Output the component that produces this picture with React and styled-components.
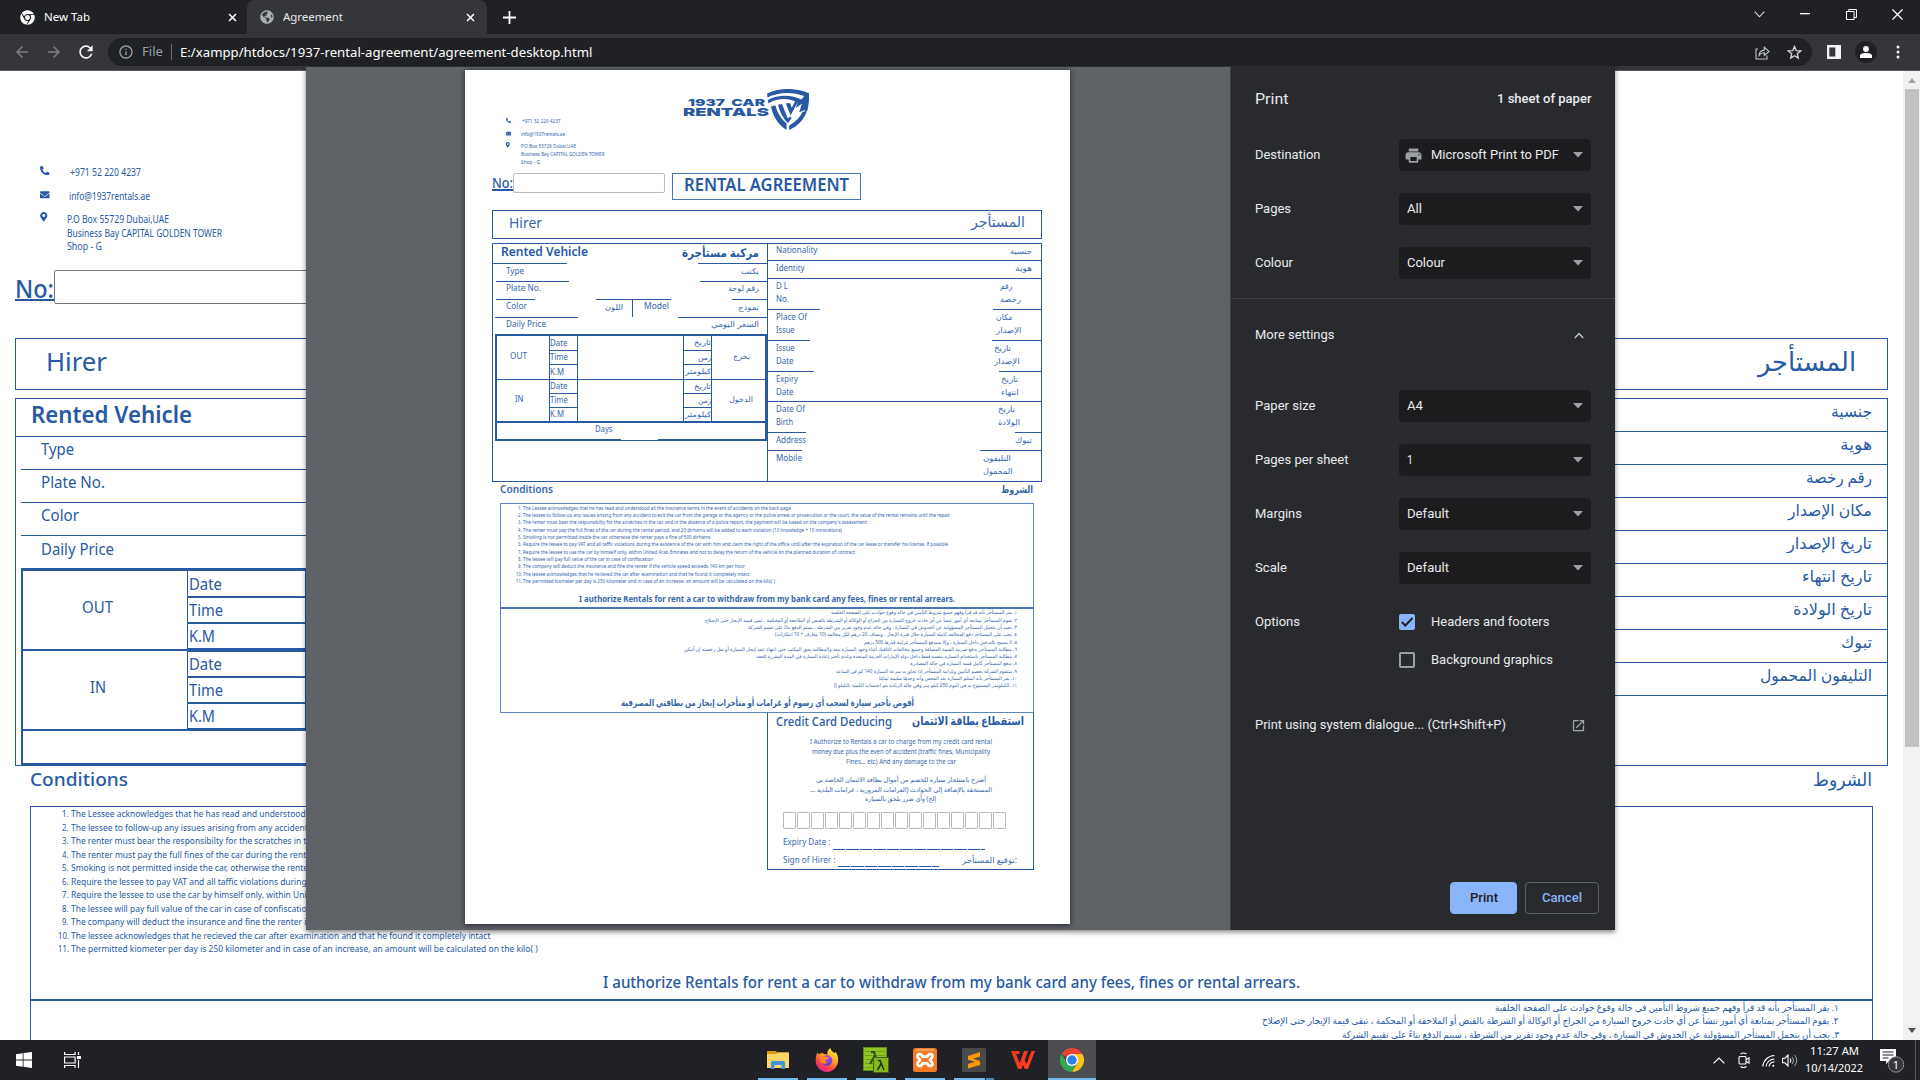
import React, { useLayoutEffect, useRef, useState } from "react";
import styled, { createGlobalStyle, css } from "styled-components";
import { FaPhoneAlt, FaEnvelope, FaMapMarkerAlt, FaChrome, FaGlobeAmericas } from "react-icons/fa";
import { MdArrowBack, MdArrowForward, MdRefresh, MdInfoOutline, MdPrint, MdOpenInNew } from "react-icons/md";

const BLUE = "#2859a3";
const DOC_FONT = '"Noto Sans", "DejaVu Sans", sans-serif';
const UI_FONT = 'Roboto, "Noto Sans", sans-serif';

const Global = createGlobalStyle`
  *{box-sizing:border-box}
  body{margin:0;overflow:hidden;background:#202124}
  svg{display:block;flex:none}
`;

/* ---------- text that keeps a fixed measure ---------- */
const Measure = styled.span`
  display: inline-flex;
  flex: none;
  width: ${(p) => p.$w}px;
  height: ${(p) => p.$size * 1.3}px;
  align-items: center;
  justify-content: flex-start;
  font-size: ${(p) => p.$size}px;
  font-weight: ${(p) => p.$weight || 400};
  line-height: 1.3;
  color: ${(p) => p.$color || "inherit"};
  margin-left: ${(p) => p.$ml || 0}px;
  direction: ltr;
`;
const Inner = styled.span`
  display: inline-block;
  white-space: nowrap;
  transform-origin: 0 50%;
`;
function Fit({ w, size, weight, color, ml, rtl, className, children }) {
  const ref = useRef(null);
  const [k, setK] = useState(1);
  useLayoutEffect(() => {
    const n = ref.current.offsetWidth;
    const exact = ref.current.getBoundingClientRect().width || n;
    setK(w / exact);
  }, [w]);
  return (
    <Measure className={className} $w={w} $size={size} $weight={weight} $color={color} $ml={ml}>
      <Inner ref={ref} dir={rtl ? "rtl" : "ltr"} style={{ transform: k === 1 ? undefined : `scaleX(${k})` }}>
        {children}
      </Inner>
    </Measure>
  );
}

/* ---------- window frame ---------- */
const Screen = styled.div`
  width: 1920px;
  height: 1080px;
  display: flex;
  flex-direction: column;
  position: relative;
  overflow: hidden;
  font-family: ${UI_FONT};
`;
const TabStrip = styled.div`
  height: 34px;
  flex: none;
  display: flex;
  background: #202124;
  color: #fff;
`;
const Tab = styled.div`
  width: ${(p) => p.$w}px;
  display: flex;
  align-items: center;
  padding: 0 ${(p) => (p.$active ? 12 : 10)}px 0 ${(p) => (p.$active ? 13 : 20)}px;
  background: ${(p) => (p.$active ? "#35363a" : "transparent")};
  border-radius: 8px 8px 0 0;
`;
const TabTitle = styled.div`
  flex: 1;
  padding-left: 8px;
  display: flex;
  font-family: "Noto Sans", sans-serif;
  color: ${(p) => (p.$active ? "#e8eaed" : "#fff")};
`;
const NewTab = styled.div`
  width: 44px;
  display: flex;
  align-items: center;
  justify-content: center;
`;
const Spacer = styled.div`
  flex: ${(p) => (p.$w ? "none" : 1)};
  width: ${(p) => (p.$w ? `${p.$w}px` : "auto")};
`;
const WinButton = styled.div`
  width: 46px;
  height: 28px;
  display: flex;
  align-items: center;
  justify-content: center;
`;
const Toolbar = styled.div`
  height: 37px;
  flex: none;
  display: flex;
  align-items: center;
  padding: 0 6px;
  background: #35363a;
  border-bottom: 1px solid #5b5a5f;
  color: #fff;
`;
const NavButton = styled.div`
  width: 32px;
  display: flex;
  justify-content: center;
  color: ${(p) => (p.$off ? "#7d7f83" : "#f1f3f4")};
`;
const Omnibox = styled.div`
  width: 1704px;
  height: 28px;
  margin-left: 6px;
  border-radius: 14px;
  background: #202124;
  display: flex;
  align-items: center;
  padding: 0 10px;
  font-family: "Noto Sans", sans-serif;
  color: #9aa0a6;
`;
const Separator = styled.div`
  width: 1px;
  height: 16px;
  margin: 0 8px;
  background: #6b6d71;
`;
const ToolIcon = styled.div`
  width: 32px;
  display: flex;
  justify-content: center;
`;
const Avatar = styled.div`
  width: 22px;
  height: 22px;
  border-radius: 50%;
  background: #202124;
  display: flex;
  align-items: center;
  justify-content: center;
`;

const Cross = () => (
  <svg width="9" height="9" viewBox="0 0 9 9" stroke="#fff" strokeWidth="1.5"><path d="M1 1l7 7M8 1L1 8" /></svg>
);

function Frame() {
  return (
    <>
      <TabStrip>
        <Tab $w={247}>
          <FaChrome size={15} />
          <TabTitle><Fit w={46} size={11.5} ml={1}>New Tab</Fit></TabTitle>
          <Cross />
        </Tab>
        <Tab $w={240} $active>
          <FaGlobeAmericas size={14} color="#a9adb2" />
          <TabTitle $active><Fit w={60} size={11.5} ml={1}>Agreement</Fit></TabTitle>
          <Cross />
        </Tab>
        <NewTab><svg width="13" height="13" viewBox="0 0 13 13" stroke="#fff" strokeWidth="1.8"><path d="M6.5 0v13M0 6.5h13" /></svg></NewTab>
        <Spacer />
        <WinButton><svg width="11" height="7" viewBox="0 0 11 7" fill="none" stroke="#dcdde0" strokeWidth="1.1"><path d="M.7.6l4.8 5.2L10.3.6" /></svg></WinButton>
        <WinButton><svg width="10" height="2"><rect width="10" height="1.3" fill="#fff" /></svg></WinButton>
        <WinButton><svg width="11" height="11" viewBox="0 0 11 11" fill="none" stroke="#fff"><path d="M.5 2.5h7.6v8H.5zM2.7 2.5v-2h7.8v8H8" /></svg></WinButton>
        <WinButton><svg width="11" height="11" viewBox="0 0 11 11" stroke="#fff" strokeWidth="1.2"><path d="M.5.5l10 10M10.500.5l-10 10" /></svg></WinButton>
      </TabStrip>
      <Toolbar>
        <NavButton $off><MdArrowBack size={18} /></NavButton>
        <NavButton $off><MdArrowForward size={18} /></NavButton>
        <NavButton><MdRefresh size={20} /></NavButton>
        <Omnibox>
          <MdInfoOutline size={16} />
          <Fit w={21} size={12.5} ml={8}>File</Fit>
          <Separator />
          <Fit w={412.5} size={13} color="#fff">E:/xampp/htdocs/1937-rental-agreement/agreement-desktop.html</Fit>
          <Spacer />
          <svg width="15" height="15" viewBox="0 0 15 15" fill="none" stroke="#c0c3c7" strokeWidth="1.1">
            <path d="M3 4H1v10h11v-3.500M4 10.500c.3-3.600 2-5.200 5.300-5.400V2.300L14 6.500l-4.700 4V7.800C7 7.800 5.300 8.600 4 10.500z" />
          </svg>
          <Spacer $w={17} />
          <svg width="15" height="15" viewBox="0 0 15 15" fill="none" stroke="#d5d7da" strokeWidth="1.3">
            <path d="M7.500 1.500l1.700 4.100 4.500.3-3.400 2.900 1 4.300-3.800-2.300-3.800 2.300 1-4.300L1.300 5.900l4.500-.3z" />
          </svg>
        </Omnibox>
        <Spacer $w={6} />
        <ToolIcon><svg width="14" height="14"><path d="M0 0h14v14H0zM2.300 2.500v9h6v-9z" fill="#f1f3f4" fillRule="evenodd" /></svg></ToolIcon>
        <ToolIcon>
          <Avatar><svg width="12" height="12" viewBox="0 0 12 12" fill="#fff"><circle cx="6" cy="3" r="2.900" /><path d="M0 12V9.500C0 7.800 3 6.900 6 6.900s6 .9 6 2.600V12z" /></svg></Avatar>
        </ToolIcon>
        <ToolIcon><svg width="4" height="14" fill="#f1f3f4"><circle cx="2" cy="2" r="1.500" /><circle cx="2" cy="7" r="1.500" /><circle cx="2" cy="12" r="1.500" /></svg></ToolIcon>
      </Toolbar>
    </>
  );
}

/* ---------- agreement text ---------- */
const CONDITIONS = [
  ["The Lessee acknowledges that he has read and understood all the insurance terms in the event of accidents on the back page", 268],
  ["The lessee to follow-up any issues arising from any accident to exit the car from the garage or the agency or the police arrest or prosecution or the court, the value of the rental remains until the repair", 427],
  ["The renter must bear the responsibilty for the scratches in the car, and in the absence of a police report, the payment will be based on the company's assessment", 344],
  ["The renter must pay the full fines of the car during the rental period, and 20 dirhams will be added to each violation (10 knowledge + 10 innovations)", 319],
  ["Smoking is not permitted inside the car, otherwise the renter pays a fine of 500 dirhams", 187.5],
  ["Require the lessee to pay VAT and all taffic violations during the existence of the car with him and claim the right of the office until after the expiration of the car lease or transfer his license, if possible", 425],
  ["Require the lessee to use the car by himself only, within United Arab Emirates and not to delay the return of the vehicle on the planned duration of contract", 332],
  ["The lessee will pay full value of the car in case of confiscation", 130],
  ["The company will deduct the insurance and fine the renter if the vehicle speed exceeds 140 km per hour", 222],
  ["The lessee acknowledges that he recieved the car after examination and that he found it completely intact", 226.5],
  ["The permitted kiometer per day is 250 kilometer and in case of an increase, an amount will be calculated on the kilo( )", 252],
];
const AR_CONDITIONS = [
  ["١. يقر المستأجر بأنه قد قرأ وفهم جميع شروط التأمين في حالة وقوع حوادث على الصفحة الخلفية", 186],
  ["٢. يقوم المستأجر بمتابعة أي أمور تنشأ عن أي حادث خروج السيارة من الجراج أو الوكالة أو الشرطة بالقبض أو الملاحقة أو المحكمة ، تبقى قيمة الإيجار حتى الإصلاح", 312],
  ["٣. يجب أن يتحمل المستأجر المسؤولية عن الخدوش في السيارة ، وفي حالة عدم وجود تقرير من الشرطة ، سيتم الدفع بناءً على تقييم الشركة", 269],
  ["٤. يجب على المستأجر دفع المخالفة كاملة للسيارة خلال فترة الإيجار ، ويضاف 20 درهم لكل مخالفة (10 معارف + 10 ابتكارات)", 242],
  ["٥. لا يسمح بالتدخين داخل السيارة ، وإلا سيدفع المستأجر غرامة قدرها 500 درهم", 153],
  ["٦. مطالبة المستأجر بدفع ضريبة القيمة المضافة وجميع مخالفات التافيك أثناء وجود السيارة معه والمطالبة بحق المكتب حتى انتهاء عقد إيجار السيارة أو نقل رخصته إن أمكن", 333],
  ["٧. مطالبة المستأجر باستخدام السيارة بنفسه فقط داخل دولة الإمارات العربية المتحدة وعدم تأخير إعادة السيارة في المدة المقررة للعقد", 261],
  ["٨. يدفع المستأجر كامل قيمة السيارة في حالة المصادرة", 107],
  ["٩. ستقوم الشركة بخصم التأمين وغرامة المستأجر إذا تجاوزت سرعة السيارة 140 كم في الساعة", 181],
  ["١٠. يقر المستأجر بأنه استلم السيارة بعد الفحص وأنه وجدها سليمة تمامًا", 138],
  ["١١. الكيلومتر المسموح به في اليوم 250 كيلو متر وفي حالة الزيادة يتم احتساب الكمية بالكيلو ()", 183],
];
const AUTHORIZE = "I authorize Rentals for rent a car to withdraw from my bank card any fees, fines or rental arrears.";

/* ---------- page behind the dialog ---------- */
const Viewport = styled.div`
  height: 969px;
  flex: none;
  display: flex;
  overflow: hidden;
  background: #fff;
  color: ${BLUE};
  font-family: ${DOC_FONT};
`;
const Doc = styled.div`
  width: 1903px;
  padding: 89px 15px 0;
`;
const ContactRow = styled.div`
  height: ${(p) => p.$h}px;
  display: flex;
  align-items: ${(p) => (p.$top ? "flex-start" : "center")};
  padding-left: ${(p) => p.$pl}px;
`;
const ContactIcon = styled.div`
  width: ${(p) => p.$w}px;
  display: flex;
  padding-bottom: ${(p) => p.$lift}px;
`;
const Stack = styled.div`
  display: flex;
  flex-direction: column;
  padding-top: ${(p) => p.$pt || 0}px;
  ${(p) => p.$h && css`& > * { height: ${p.$h}px; }`}
`;
const NumberRow = styled.div`
  display: flex;
  height: ${(p) => p.$h}px;
  margin-top: ${(p) => p.$mt || 0}px;
`;
const NumberLabel = styled.div`
  border-bottom: 2px solid ${BLUE};
  height: ${(p) => p.$h}px;
  display: flex;
  align-items: center;
  padding-top: ${(p) => p.$pt || 0}px;
`;
const NumberInput = styled.div`
  width: ${(p) => p.$w}px;
  height: ${(p) => p.$h}px;
  border: 1px solid ${(p) => p.$line};
  border-radius: 2px;
`;
const HirerBox = styled.div`
  height: ${(p) => p.$h}px;
  margin-top: ${(p) => p.$mt}px;
  padding: 0 ${(p) => p.$pr}px ${(p) => p.$pb}px ${(p) => p.$pl}px;
  border: 1px solid ${BLUE};
  display: flex;
  align-items: center;
  justify-content: space-between;
`;
const MainBox = styled.div`
  height: ${(p) => p.$h}px;
  margin-top: ${(p) => p.$mt}px;
  border: 1px solid ${BLUE};
  display: flex;
`;
const Column = styled.div`
  width: ${(p) => p.$w}px;
  border-right: ${(p) => (p.$divide ? `${p.$divide}px solid ${BLUE}` : 0)};
`;
const FieldRow = styled.div`
  height: ${(p) => p.$h}px;
  margin-left: ${(p) => p.$ml || 0}px;
  padding: ${(p) => p.$pad || "0"};
  border-bottom: ${(p) => (p.$rule ? `1px solid ${BLUE}` : 0)};
  display: flex;
  align-items: center;
  justify-content: ${(p) => (p.$end ? "flex-end" : "space-between")};
`;
const LogTable = styled.div`
  margin-left: ${(p) => p.$ml}px;
  border-left: 2px solid ${BLUE};
  border-right: 2px solid ${BLUE};
  border-top: ${(p) => p.$top}px solid ${BLUE};
`;
const LogGroup = styled.div`
  height: ${(p) => p.$h}px;
  display: flex;
  align-items: flex-start;
`;
const LogLabel = styled.div`
  width: ${(p) => p.$w}px;
  height: ${(p) => p.$h}px;
  border-bottom: ${(p) => p.$b}px solid ${BLUE};
  display: flex;
  align-items: center;
  justify-content: center;
  padding: ${(p) => p.$pad || "0"};
`;
const LogCells = styled.div`
  width: ${(p) => p.$w}px;
  border: solid ${BLUE};
  border-width: 0 1px;
`;
const LogCell = styled.div`
  height: ${(p) => p.$h}px;
  border-bottom: ${(p) => p.$b}px solid ${BLUE};
  display: flex;
  align-items: center;
  justify-content: ${(p) => (p.$end ? "flex-end" : "flex-start")};
`;
const DaysRow = styled.div`
  height: 35px;
  border-bottom: 3px solid ${BLUE};
`;
const SectionHead = styled.div`
  height: ${(p) => p.$h}px;
  padding: ${(p) => p.$pad};
  display: flex;
  align-items: center;
  justify-content: space-between;
`;
const TermsBox = styled.div`
  margin: 0 ${(p) => p.$mr}px 0 ${(p) => p.$ml}px;
  height: ${(p) => p.$h}px;
  border: 1px solid ${(p) => p.$line || BLUE};
`;
const TermsPart = styled.div`
  height: ${(p) => p.$h}px;
  border-bottom: ${(p) => p.$b}px solid ${(p) => p.$line || BLUE};
  padding-top: ${(p) => p.$pt}px;
`;
const Term = styled.div`
  height: ${(p) => p.$h}px;
  display: flex;
  align-items: center;
  justify-content: ${(p) => (p.$end ? "flex-end" : "flex-start")};
  padding-right: ${(p) => p.$pr || 0}px;
`;
const TermNo = styled.div`
  width: ${(p) => p.$w}px;
  margin-right: ${(p) => p.$gap}px;
  display: flex;
  justify-content: flex-end;
`;
const Centered = styled.div`
  height: ${(p) => p.$h}px;
  display: flex;
  justify-content: center;
  align-items: center;
  padding: ${(p) => p.$pad || "0"};
`;
const ScrollTrack = styled.div`
  width: 17px;
  background: #f1f1f1;
  display: flex;
  flex-direction: column;
  align-items: center;
  padding: 7px 0;
`;
const ScrollThumb = styled.div`
  width: 14px;
  height: 658px;
  margin-top: 6px;
  background: #c1c1c1;
`;

const RIGHT_ROWS = [
  ["جنسية", 41], ["هوية", 32], ["رقم رخصة", 66], ["مكان الإصدار", 84], ["تاريخ الإصدار", 85],
  ["تاريخ انتهاء", 70], ["تاريخ الولادة", 79], ["تبوك", 31], ["التليفون المحمول", 112],
];

function BackPage() {
  const cell = (t, w, h, b) => <LogCell key={t} $h={h} $b={b}><Fit w={w} size={16.5} ml={0.5}>{t}</Fit></LogCell>;
  return (
    <Viewport>
      <Doc>
        <ContactRow $h={24} $pl={25}>
          <ContactIcon $w={29.5} $lift={3}><FaPhoneAlt size={9.5} /></ContactIcon>
          <Fit w={71} size={10}>+971 52 220 4237</Fit>
        </ContactRow>
        <ContactRow $h={25} $pl={25}>
          <ContactIcon $w={29} $lift={4}><FaEnvelope size={9.5} /></ContactIcon>
          <Fit w={81} size={10}>info@1937rentals.ae</Fit>
        </ContactRow>
        <ContactRow $h={45} $pl={24} $top>
          <ContactIcon $w={28} $lift={0}><Stack $pt={3}><FaMapMarkerAlt size={9.500} /></Stack></ContactIcon>
          <Stack $h={13.6} $pt={4}>
            <Fit w={102} size={10}>P.O Box 55729 Dubai,UAE</Fit>
            <Fit w={155} size={10}>Business Bay CAPITAL GOLDEN TOWER</Fit>
            <Fit w={35} size={10}>Shop - G</Fit>
          </Stack>
        </ContactRow>
        <NumberRow $h={34} $mt={16}>
          <NumberLabel $h={31} $pt={8}><Fit w={39} size={26} weight={500}>No:</Fit></NumberLabel>
          <NumberInput $w={700} $h={34} $line="#767676" />
        </NumberRow>
        <HirerBox $h={52} $mt={34} $pl={30} $pr={31} $pb={5}>
          <Fit w={61} size={26}>Hirer</Fit>
          <Fit w={98} size={26} rtl>المستأجر</Fit>
        </HirerBox>
        <MainBox $h={368} $mt={8}>
          <Column $w={936} $divide={1}>
            <FieldRow $h={38} $rule $pad="0 0 6px 15px"><Fit w={161} size={23.5} weight={600}>Rented Vehicle</Fit></FieldRow>
            <FieldRow $h={33} $ml={5} $rule $pad="0 0 9px 20px"><Fit w={33} size={16.500}>Type</Fit></FieldRow>
            <FieldRow $h={33} $ml={5} $rule $pad="0 0 8px 20px"><Fit w={64} size={16.500}>Plate No.</Fit></FieldRow>
            <FieldRow $h={33} $ml={5} $rule $pad="0 0 8px 20px"><Fit w={38} size={16.500}>Color</Fit></FieldRow>
            <FieldRow $h={32} $ml={5} $pad="0 0 7px 20px"><Fit w={73} size={16.500}>Daily Price</Fit></FieldRow>
            <LogTable $ml={5} $top={3}>
              <LogGroup $h={81}>
                <LogLabel $w={164} $h={80} $b={2} $pad="0 15px 7px 0"><Fit w={31} size={16.5}>OUT</Fit></LogLabel>
                <LogCells $w={119}>{cell("Date", 33, 27, 2)}{cell("Time", 34, 26, 2)}{cell("K.M", 26, 28, 4)}</LogCells>
              </LogGroup>
              <LogGroup $h={79}>
                <LogLabel $w={164} $h={79} $b={2} $pad="0 15px 8px 0"><Fit w={16} size={16.5}>IN</Fit></LogLabel>
                <LogCells $w={119}>{cell("Date", 33, 26, 2)}{cell("Time", 34, 26, 2)}{cell("K.M", 26, 27, 3)}</LogCells>
              </LogGroup>
              <DaysRow />
            </LogTable>
          </Column>
          <Column $w={935}>
            {RIGHT_ROWS.map(([t, w]) => (
              <FieldRow key={t} $h={33} $rule $end $pad="0 15px 7px 0"><Fit w={w} size={16} rtl>{t}</Fit></FieldRow>
            ))}
          </Column>
        </MainBox>
        <SectionHead $h={40} $pad="0 16px 13px 15px">
          <Fit w={98} size={18.5} weight={500}>Conditions</Fit>
          <Fit w={59} size={18} weight={500} rtl>الشروط</Fit>
        </SectionHead>
        <TermsBox $ml={15} $mr={15} $h={400}>
          <TermsPart $h={194} $b={2} $pt={0.5}>
            {CONDITIONS.map(([t, w], i) => (
              <Term key={t} $h={13.5}>
                <TermNo $w={37.5} $gap={2.5}><Fit w={i > 8 ? 11 : 6.5} size={9.6}>{i + 1}.</Fit></TermNo>
                <Fit w={w * 1.852} size={9.6}>{t}</Fit>
              </Term>
            ))}
            <Centered $h={51}><Fit w={697} size={16.500} weight={500}>{AUTHORIZE}</Fit></Centered>
          </TermsPart>
          <TermsPart $h={200} $b={0} $pt={0}>
            {AR_CONDITIONS.slice(0, 3).map(([t, w]) => (
              <Term key={t} $h={13.5} $end $pr={33}><Fit w={w * 1.848} size={9.6} rtl>{t}</Fit></Term>
            ))}
          </TermsPart>
        </TermsBox>
      </Doc>
      <ScrollTrack>
        <svg width="8" height="5"><path d="M0 5l4-5 4 5z" fill="#a3a3a3" /></svg>
        <ScrollThumb />
        <Spacer />
        <svg width="8" height="5"><path d="M0 0l4 5 4-5z" fill="#505050" /></svg>
      </ScrollTrack>
    </Viewport>
  );
}

/* ---------- print preview ---------- */
const Dialog = styled.div`
  position: absolute;
  left: 306px;
  top: 66px;
  width: 1309px;
  height: 864px;
  display: flex;
  background: #5f6368;
  box-shadow: 0 2px 5px rgba(0, 0, 0, 0.5);
`;
const Preview = styled.div`
  width: 924px;
  border-top: 1px solid #303135;
  padding: 3px 0 0 159px;
`;
const Sheet = styled.div`
  width: 605px;
  height: 854px;
  padding: 0 28px 0 27px;
  background: #fff;
  color: #3766ac;
  font-family: ${DOC_FONT};
  box-shadow: 0 1px 5px 1px rgba(0, 0, 0, 0.45);
`;
const SheetHead = styled.div`
  height: 103px;
  display: flex;
`;
const SheetContact = styled.div`
  width: 191px;
  padding-top: 45px;
`;
const Logo = styled.div`
  display: flex;
  padding-top: 19px;
`;
const LogoText = styled.div`
  width: 84px;
  padding-top: 10px;
  font-family: Inter, "DejaVu Sans", sans-serif;
  color: ${BLUE};
`;
const LogoLine = styled.div`
  height: 9px;
  display: flex;
  align-items: center;
  word-spacing: 2px;
`;
const TitleBox = styled.div`
  width: 189px;
  height: 27px;
  margin-left: 7px;
  border: 1px solid #4a76b6;
  display: flex;
  align-items: center;
  justify-content: center;
  padding-bottom: 2px;
  color: ${BLUE};
`;
const Rule = styled.div`
  height: 1px;
  display: flex;
`;
const Seg = styled.i`
  width: ${(p) => p.$w}px;
  background: ${(p) => (p.$on ? BLUE : "transparent")};
  height: 1px;
`;
const Segments = ({ parts }) => (
  <Rule>{parts.map((w, i) => <Seg key={i} $w={Math.abs(w)} $on={w > 0} />)}</Rule>
);
const MiniSpan = styled.div`
  display: flex;
  flex: none;
  width: ${(p) => p.$w}px;
  padding-bottom: ${(p) => p.$pb || 0}px;
`;
const VRule = styled.div`
  width: 1px;
  height: 17px;
  background: ${BLUE};
`;
const MiniDays = styled.div`
  height: 18px;
  display: flex;
  align-items: flex-start;
`;
const DaysPart = styled.div`
  width: ${(p) => p.$w}px;
  height: 18px;
  border-bottom: ${(p) => p.$b}px solid ${BLUE};
  padding: 0 0 4px ${(p) => p.$pl || 0}px;
  display: flex;
  align-items: center;
`;
const PairRow = styled.div`
  height: ${(p) => p.$h}px;
  display: flex;
  justify-content: space-between;
  align-items: ${(p) => (p.$top ? "flex-start" : "center")};
  padding: ${(p) => (p.$top ? 0.6 : 0)}px ${(p) => p.$pr}px ${(p) => (p.$top ? 0 : 2)}px 8px;
`;
const CardBox = styled.div`
  width: 267px;
  height: 157px;
  margin-left: 275px;
  border: 1px solid ${BLUE};
  border-top-width: 0;
`;
const CardHead = styled.div`
  height: 20px;
  padding: 0 9px 3px 8px;
  display: flex;
  justify-content: space-between;
  align-items: center;
`;
const Paragraph = styled.div`
  height: 28.500px;
  margin-top: ${(p) => p.$mt}px;
  display: flex;
  flex-direction: column;
  align-items: center;
  & > * { height: 9.600px; }
`;
const Digits = styled.div`
  display: flex;
  gap: 1.200px;
  margin: 8px 0 0 15px;
`;
const Digit = styled.div`
  width: 12.800px;
  height: 17px;
  border: 1px solid #b9b9b9;
  border-radius: 1px;
`;
const CardFieldsWrap = styled.div`
  padding-top: 5px;
`;
const SignRow = styled.div`
  height: 17.5px;
  display: flex;
  align-items: center;
  padding: 0 16px 0 15px;
`;
const Dashes = styled.div`
  width: ${(p) => p.$w}px;
  height: 1px;
  margin: 13px 0 0 2px;
  background: repeating-linear-gradient(90deg, ${BLUE} 0 12px, transparent 12px 13px, ${BLUE} 13px 26px, transparent 26px 27px);
`;

function Shield() {
  return (
    <svg width="42" height="41" viewBox="0 0 42 41" fill={BLUE}>
      <path d="M0 4.500C12-1.500 29-1.500 42 4.200c.2 6 0 11.500-1.600 17.200l-3 1.800.6-2.300-5.800 2.400L35 14.500l-6.200 4.500 2.300-6.600-7.600 14.200-4.600-12.300h4.300l1.500 4.500 3.400-6.300C22 9.500 11 8.500 1.500 14.500L.8 11C12 5 25 5.800 34.500 10.500l2.700-3.500C25 2.500 11 2.800.6 8.500z" />
      <path d="M4 17.500l4.300-1.200c2 7.500 6 14 11.200 18V41C11 35.500 6 27.500 4 17.500zM11 15.700l4-.7 5.800 14.500 2.400-2 1.500 1.500-3.800 5.200c-4.500-4.500-8-11-9.900-18.500zM40 22c-2.800 8-8.500 15-17.800 19v-4.500C29 32.500 33 28 35.500 23z" />
    </svg>
  );
}

const DETAILS = [
  { h: 16, en: [["Nationality", 41.5]], ar: [["جنسية", 22]], pr: 9, rule: [275] },
  { h: 17, en: [["Identity", 28.6]], ar: [["هوية", 17]], pr: 9, rule: [275] },
  { h: 30, en: [["D L", 12], ["No.", 13]], ar: [["رقم", 12.5], ["رخصة", 21]], left: 1000, rule: [52, -175, 48] },
  { h: 30, en: [["Place Of", 31], ["Issue", 18.6]], ar: [["مكان", 16.500], ["الإصدار", 25.500]], left: 995.5, rule: [42, -184, 49] },
  { h: 30, en: [["Issue", 18.6], ["Date", 17.6]], ar: [["تاريخ", 17], ["الإصدار", 25.6]], left: 994, rule: [46, -187, 42] },
  { h: 29, en: [["Expiry", 22], ["Date", 17.6]], ar: [["تاريخ", 17], ["انتهاء", 17.6]], left: 1000.5, rule: [275] },
  { h: 30, en: [["Date Of", 29], ["Birth", 17]], ar: [["تاريخ", 17], ["الولادة", 22]], left: 998, rule: [38, -211, 26] },
  { h: 17, en: [["Address", 30]], ar: [["تبوك", 17]], pr: 9, rule: [34, -180, 61] },
  { h: 30, en: [["Mobile", 26]], ar: [["التليفون", 28], ["المحمول", 29.500]], left: 982.5 },
];

function MiniGroup({ label, lw, ar, aw, heights, b }) {
  const total = heights.reduce((a, c) => a + c, 0);
  const rows = [["Date", 17.500, "تاريخ", 17], ["Time", 18, "زمن", 13.500], ["K.M", 14, "كيلومتر", 26]];
  return (
    <LogGroup $h={total}>
      <LogLabel $w={52} $h={total} $b={b} $pad="0 8px 3px 0"><Fit w={lw} size={8}>{label}</Fit></LogLabel>
      <LogCells $w={30}>
        {rows.map(([t, w], i) => <LogCell key={t} $h={heights[i]} $b={i === 2 ? b : 1}><Fit w={w} size={8}>{t}</Fit></LogCell>)}
      </LogCells>
      <LogLabel $w={105} $h={total} $b={b} />
      <LogCells $w={30}>
        {rows.map(([, , t, w], i) => <LogCell key={t} $h={heights[i]} $b={i === 2 ? b : 1} $end><Fit w={w} size={7.500} rtl>{t}</Fit></LogCell>)}
      </LogCells>
      <LogLabel $w={53} $h={total} $b={b} $pad="0 0 2px 5px"><Fit w={aw} size={7.500} rtl>{ar}</Fit></LogLabel>
    </LogGroup>
  );
}

function CardFields() {
  return (
    <CardFieldsWrap>
      <SignRow><Fit w={47.500} size={8.600}>Expiry Date :</Fit><Dashes $w={152} /></SignRow>
      <SignRow>
        <Fit w={52.500} size={8.600}>Sign of Hirer :</Fit><Dashes $w={101} />
        <Spacer />
        <Fit w={55} size={8}>توقيع المستأجر:</Fit>
      </SignRow>
    </CardFieldsWrap>
  );
}

function SheetPreview() {
  return (
    <Sheet>
      <SheetHead>
        <SheetContact>
          <ContactRow $h={12} $pl={13.5}>
            <ContactIcon $w={16} $lift={1}><FaPhoneAlt size={5} color={BLUE} /></ContactIcon>
            <Fit w={38.500} size={5.2}>+971 52 220 4237</Fit>
          </ContactRow>
          <ContactRow $h={14} $pl={13.5}>
            <ContactIcon $w={15.500} $lift={2}><FaEnvelope size={5} color={BLUE} /></ContactIcon>
            <Fit w={44} size={5.2}>info@1937rentals.ae</Fit>
          </ContactRow>
          <ContactRow $h={27} $pl={13} $top>
            <ContactIcon $w={15.500} $lift={0}><Stack $pt={1}><FaMapMarkerAlt size={5.500} color={BLUE} /></Stack></ContactIcon>
            <Stack $h={7.8} $pt={1.4}>
              <Fit w={55} size={5.2}>P.O Box 55729 Dubai,UAE</Fit>
              <Fit w={83.5} size={5.2}>Business Bay CAPITAL GOLDEN TOWER</Fit>
              <Fit w={19} size={5.2}>Shop - G</Fit>
            </Stack>
          </ContactRow>
        </SheetContact>
        <Logo>
          <LogoText>
            <LogoLine><Fit w={77} size={9.500} weight={900} ml={5}>1937 CAR</Fit></LogoLine>
            <LogoLine><Fit w={86} size={11} weight={900}>RENTALS</Fit></LogoLine>
          </LogoText>
          <Shield />
        </Logo>
      </SheetHead>
      <NumberRow $h={27}>
        <NumberLabel $h={18} $pt={4}><Fit w={21} size={14} weight={500} color={BLUE}>No:</Fit></NumberLabel>
        <NumberInput $w={152} $h={20} $line="#bdbdbd" />
        <TitleBox><Fit w={165} size={17} weight={600}>RENTAL AGREEMENT</Fit></TitleBox>
      </NumberRow>
      <HirerBox $h={29} $mt={10} $pl={16} $pr={16} $pb={4}>
        <Fit w={33} size={14.500}>Hirer</Fit>
        <Fit w={54} size={14} rtl>المستأجر</Fit>
      </HirerBox>
      <MainBox $h={239} $mt={4}>
        <Column $w={275} $divide={1}>
          <FieldRow $h={19} $pad="0 8px 2px 8px">
            <Fit w={87} size={12.500} weight={600} color={BLUE}>Rented Vehicle</Fit>
            <Fit w={77} size={12} weight={700} color={BLUE} rtl>مركبة مستأجرة</Fit>
          </FieldRow>
          <Segments parts={[74, -131, 69]} />
          <FieldRow $h={17} $pad="0 8px 2px 13px"><Fit w={18} size={8.600}>Type</Fit><Fit w={18} size={8} rtl>يكتب</Fit></FieldRow>
          <Segments parts={[-3, 73, -131, 67]} />
          <FieldRow $h={17} $pad="0 8px 4px 13px"><Fit w={35} size={8.600}>Plate No.</Fit><Fit w={31} size={8} rtl>رقم لوحة</Fit></FieldRow>
          <Segments parts={[-3, 39, -61, 75, -61, 35]} />
          <FieldRow $h={17} $pad="0 8px 0 13px">
            <MiniSpan $w={99} $pb={3}><Fit w={21} size={8.600}>Color</Fit></MiniSpan>
            <MiniSpan $w={26} $pb={2}><Fit w={18} size={8} rtl>اللون</Fit></MiniSpan>
            <VRule />
            <MiniSpan $w={105} $pb={3}><Fit w={25} size={8.600} ml={11}>Model</Fit></MiniSpan>
            <MiniSpan $w={21} $pb={2}><Fit w={21} size={8} rtl>نموذج</Fit></MiniSpan>
          </FieldRow>
          <Segments parts={[-2, 83, -100, 89]} />
          <FieldRow $h={16} $pad="0 8px 3px 13px"><Fit w={40} size={8.600}>Daily Price</Fit><Fit w={48} size={8} rtl>السعر اليومي</Fit></FieldRow>
          <LogTable $ml={2} $top={2}>
            <MiniGroup label="OUT" lw={17} ar="يخرج" aw={17} heights={[15, 14, 15]} b={1} />
            <MiniGroup label="IN" lw={8.500} ar="الدخول" aw={24} heights={[14, 14, 15]} b={2} />
            <MiniDays>
              <DaysPart $w={124} $b={2} $pl={98}><Fit w={17.500} size={8}>Days</Fit></DaysPart>
              <DaysPart $w={38} $b={1} />
              <DaysPart $w={108} $b={2} />
            </MiniDays>
          </LogTable>
        </Column>
        <Column $w={273}>
          {DETAILS.map((d, i) => (
            <React.Fragment key={i}>
              <PairRow $h={d.h} $top={d.h > 20} $pr={d.pr || 0}>
                <Stack $h={d.h > 20 ? 13 : 0}>{d.en.map(([t, w]) => <Fit key={t} w={w} size={8.600}>{t}</Fit>)}</Stack>
                <MiniSpan $w={d.left ? 1041 - d.left : d.ar[0][1]}>
                  <Stack $h={d.h > 20 ? 13 : 0}>{d.ar.map(([t, w]) => <Fit key={t} w={w} size={8} rtl>{t}</Fit>)}</Stack>
                </MiniSpan>
              </PairRow>
              {d.rule && <Segments parts={d.rule} />}
            </React.Fragment>
          ))}
        </Column>
      </MainBox>
      <SectionHead $h={21} $pad="0 9px 6px 8px">
        <Fit w={53} size={11} weight={600}>Conditions</Fit>
        <Fit w={32} size={10.500} weight={700} rtl>الشروط</Fit>
      </SectionHead>
      <TermsBox $ml={8} $mr={8} $h={210} $line="#5f86bf">
        <TermsPart $h={105} $b={2} $pt={0.500} $line="#4a76b6">
          {CONDITIONS.map(([t, w], i) => (
            <Term key={t} $h={7.3}>
              <TermNo $w={20.500} $gap={1}><Fit w={i > 8 ? 6 : 3.5} size={5}>{i + 1}.</Fit></TermNo>
              <Fit w={w} size={5}>{t}</Fit>
            </Term>
          ))}
          <Centered $h={25} $pad="4px 0 0"><Fit w={376} size={9} weight={700}>{AUTHORIZE}</Fit></Centered>
        </TermsPart>
        <TermsPart $h={103} $b={0} $pt={0}>
          {AR_CONDITIONS.map(([t, w]) => (
            <Term key={t} $h={7.3} $end $pr={16}><Fit w={w} size={5} rtl>{t}</Fit></Term>
          ))}
          <Centered $h={22} $pad="5px 0 0"><Fit w={293} size={9.500} weight={700} rtl>أفوض تأجير سيارة لسحب أي رسوم أو غرامات أو متأخرات إيجار من بطاقتي المصرفية</Fit></Centered>
        </TermsPart>
      </TermsBox>
      <CardBox>
        <CardHead>
          <Fit w={116} size={12} weight={500} color={BLUE}>Credit Card Deducing</Fit>
          <Fit w={112} size={11.500} weight={700} color={BLUE} rtl>استقطاع بطاقة الائتمان</Fit>
        </CardHead>
        <Paragraph $mt={5}>
          <Fit w={182} size={6.700}>I Authorize to Rentals a car to charge from my credit card rental</Fit>
          <Fit w={178} size={6.700}>money due plus the even of accident (traffic fines, Municipality</Fit>
          <Fit w={110} size={6.700}>Fines... etc) And any damage to the car</Fit>
        </Paragraph>
        <Paragraph $mt={9}>
          <Fit w={170} size={6.500} rtl>أصرح باستئجار سيارة للخصم من أموال بطاقة الائتمان الخاصة بي</Fit>
          <Fit w={182} size={6.500} rtl>المستحقة بالإضافة إلى الحوادث (الغرامات المرورية ، غرامات البلدية ...</Fit>
          <Fit w={71} size={6.500} rtl>إلخ) وأي ضرر يلحق بالسيارة</Fit>
        </Paragraph>
        <Digits>{Array.from({ length: 16 }, (_, i) => <Digit key={i} />)}</Digits>
        <CardFields />
      </CardBox>
    </Sheet>
  );
}

/* ---------- print settings ---------- */
const Panel = styled.div`
  width: 385px;
  background: #292a2d;
  border-left: 1px solid #3c4043;
  color: #e8eaed;
  display: flex;
  flex-direction: column;
  font-size: 13px;
`;
const PanelHead = styled.div`
  height: 67px;
  padding: 0 24px;
  display: flex;
  justify-content: space-between;
  align-items: center;
`;
const Setting = styled.div`
  height: 32px;
  margin-bottom: 22px;
  padding: 0 24px;
  display: flex;
  align-items: center;
  justify-content: space-between;
`;
const Select = styled.div`
  width: 192px;
  height: 32px;
  border-radius: 4px;
  background: #1c1c1e;
  display: flex;
  align-items: center;
  padding: 0 8px;
`;
const Block = styled.div`
  padding-top: ${(p) => p.$pt}px;
`;
const MoreRow = styled.div`
  height: 73px;
  margin-top: -3px;
  border-top: 1px solid #3f4043;
  padding: 1px 31px 0 24px;
  display: flex;
  align-items: center;
  justify-content: space-between;
`;
const OptionGroup = styled.div`
  margin-top: -3px;
`;
const OptionCell = styled.div`
  width: 192px;
  display: flex;
  align-items: center;
  gap: 16px;
`;
const CheckBox = styled.div`
  width: 16px;
  height: 16px;
  border-radius: 2px;
  border: ${(p) => (p.$on ? 0 : "2px solid #9aa0a6")};
  background: ${(p) => (p.$on ? "#8ab4f8" : "transparent")};
`;
const OptionRow = styled.div`
  height: 38px;
  padding: 0 24px;
  display: flex;
  align-items: center;
  justify-content: space-between;
`;
const SystemRow = styled.div`
  height: 40px;
  margin-top: 26px;
  padding: 0 29px 0 24px;
  display: flex;
  align-items: center;
  justify-content: space-between;
`;
const Actions = styled.div`
  display: flex;
  justify-content: flex-end;
  gap: 8px;
  padding: 0 16px 16px 0;
`;
const Button = styled.div`
  width: ${(p) => p.$w}px;
  height: 32px;
  border-radius: 4px;
  border: 1px solid ${(p) => (p.$primary ? "#8ab4f8" : "#5f6368")};
  background: ${(p) => (p.$primary ? "#8ab4f8" : "transparent")};
  color: ${(p) => (p.$primary ? "#202124" : "#8ab4f8")};
  display: flex;
  align-items: center;
  justify-content: center;
`;
const PrinterSlot = styled.div`
  width: 24px;
  margin-left: -3px;
`;
const Caret = () => <svg width="10" height="6"><path d="M0 0h10L5 5.500z" fill="#9aa0a6" /></svg>;

function Choice({ label, lw, value, vw, icon }) {
  return (
    <Setting>
      <Fit w={lw} size={13}>{label}</Fit>
      <Select>
        {icon && <PrinterSlot><MdPrint size={19} color="#9aa0a6" /></PrinterSlot>}
        <Fit w={vw} size={13} ml={icon ? 3 : 0}>{value}</Fit>
        <Spacer />
        <Caret />
      </Select>
    </Setting>
  );
}

function PrintPanel() {
  return (
    <Panel>
      <PanelHead>
        <Fit w={33.500} size={15}>Print</Fit>
        <Fit w={94.500} size={13} weight={500}>1 sheet of paper</Fit>
      </PanelHead>
      <Block $pt={6}>
        <Choice label="Destination" lw={65.500} value="Microsoft Print to PDF" vw={128} icon />
        <Choice label="Pages" lw={36} value="All" vw={15} />
        <Choice label="Colour" lw={38} value="Colour" vw={38} />
      </Block>
      <MoreRow>
        <Fit w={79.500} size={13}>More settings</Fit>
        <svg width="10" height="7" viewBox="0 0 10 7" fill="none" stroke="#bdc1c6" strokeWidth="1.500"><path d="M.8 6L5 1.500 9.200 6" /></svg>
      </MoreRow>
      <Block $pt={19}>
        <Choice label="Paper size" lw={60.500} value="A4" vw={16} />
        <Choice label="Pages per sheet" lw={93.500} value="1" vw={6} />
        <Choice label="Margins" lw={47} value="Default" vw={42} />
        <Choice label="Scale" lw={32} value="Default" vw={42} />
      </Block>
      <OptionGroup>
        <OptionRow>
          <Fit w={45} size={13}>Options</Fit>
          <OptionCell>
            <CheckBox $on><svg width="16" height="16" viewBox="0 0 16 16" fill="none" stroke="#202124" strokeWidth="2"><path d="M2.800 8l3.500 3.500L13.500 4" /></svg></CheckBox>
            <Fit w={118.500} size={13}>Headers and footers</Fit>
          </OptionCell>
        </OptionRow>
        <OptionRow>
          <span />
          <OptionCell><CheckBox /><Fit w={122} size={13}>Background graphics</Fit></OptionCell>
        </OptionRow>
      </OptionGroup>
      <SystemRow>
        <Fit w={251} size={13}>Print using system dialogue... (Ctrl+Shift+P)</Fit>
        <MdOpenInNew size={15} color="#a4a9ae" />
      </SystemRow>
      <Spacer />
      <Actions>
        <Button $w={67} $primary><Fit w={28} size={13} weight={500}>Print</Fit></Button>
        <Button $w={74}><Fit w={40} size={13} weight={500}>Cancel</Fit></Button>
      </Actions>
    </Panel>
  );
}

/* ---------- taskbar ---------- */
const Taskbar = styled.div`
  height: 40px;
  flex: none;
  display: flex;
  background: #1f2126;
  color: #fff;
  font-family: "Noto Sans", sans-serif;
`;
const Cell = styled.div`
  width: ${(p) => p.$w}px;
  display: flex;
  align-items: center;
  justify-content: center;
`;
const TaskApp = styled.div`
  width: ${(p) => (p.$active ? 48 : 49)}px;
  height: 40px;
  padding-top: 2px;
  display: flex;
  flex-direction: column;
  align-items: center;
  justify-content: space-between;
  background: ${(p) => (p.$active ? "#4b4d51" : "transparent")};
`;
const IconBox = styled.div`
  height: 36px;
  display: flex;
  align-items: center;
`;
const Running = styled.div`
  width: ${(p) => p.$w}px;
  height: 2px;
  background: ${(p) => (p.$split ? "linear-gradient(90deg,#76b9ed 31px,#1f2126 31px 32px,#5085b0 32px)" : "#76b9ed")};
`;
const Clock = styled.div`
  width: 70px;
  display: flex;
  flex-direction: column;
  align-items: center;
  justify-content: center;
  gap: 2px;
`;

const FolderIcon = () => (
  <svg width="22" height="18" viewBox="0 0 22 18"><path d="M0 0h9l1.500 1.500H22V5H0z" fill="#d69a11" /><path d="M0 3h9l2-1.500h11V17H0z" fill="#ffd666" /><path d="M4 18v-6.500q0-1.500 1.500-1.500h11q1.500 0 1.500 1.500V18h-3.500v-4h-7v4z" fill="#3f97d9" /></svg>
);
const FirefoxIcon = () => (
  <svg width="24" height="24" viewBox="0 0 24 24">
    <defs>
      <linearGradient id="ffx" x1=".8" y1=".1" x2=".3" y2="1"><stop offset="0" stopColor="#ffe53a" /><stop offset=".4" stopColor="#ff9a1f" /><stop offset=".7" stopColor="#ff4545" /><stop offset="1" stopColor="#e3208c" /></linearGradient>
      <radialGradient id="ffp" cx=".6" cy=".2" r=".9"><stop offset="0" stopColor="#b44cf0" /><stop offset="1" stopColor="#4a3fc0" /></radialGradient>
    </defs>
    <path d="M2.500 4.500c.4.800.8 1.400 1.300 1.800C4.500 5.800 5.700 5 7.500 5L9 6l3.500.5C11.800 4 13 1.500 15.500 0c.2 2.500 2 3.500 4 5.200.5-.3.500-1 .500-1.700C22.500 6 23.500 9.500 23 13.500 22.200 19.500 17.500 24 12 24S.800 19.500.700 13C.600 9.500 1.200 6.800 2.500 4.500z" fill="url(#ffx)" />
    <circle cx="12" cy="12.500" r="5.300" fill="url(#ffp)" />
    <path d="M5 8.500c2.500-1 4.500-.5 6 .6 1.500 0 2.700.400 2.700 1.100-.6 1.100-2.300.9-3.200 2-.7 1 .4 2.400 2.300 1.900-2 2.700-6.300 2-7.300-1.300z" fill="#ff8a24" />
  </svg>
);
const LambdaIcon = () => (
  <svg width="26" height="26" viewBox="0 0 26 26">
    <rect x=".5" y=".5" width="23" height="23" fill="#8fc31f" stroke="#5d8a1c" />
    <path d="M2 4.500h20M2 8.500h20M2 12.500h20M2 16.500h9M2 20.500h9" stroke="#6ea01a" />
    <path d="M8 5h3l4 12M11.500 9L7 17" stroke="#35501a" strokeWidth="2" fill="none" />
    <rect x="10.500" y="10.500" width="15" height="15" fill="#84b81e" stroke="#3f6114" />
    <path d="M15 13.500h2l4 9.500M18 17l-3.500 6" stroke="#1f3010" strokeWidth="1.500" fill="none" />
  </svg>
);
const XamppIcon = () => (
  <svg width="24" height="24" viewBox="0 0 24 24"><rect width="24" height="24" rx="2.500" fill="#f47a28" /><path d="M3 2h18" stroke="#ffc08a" /><path d="M9.500 8.700C8.500 5 4 5.500 4.500 8.500 4.700 10 6 10.500 7 12c-1 1.500-2.300 2-2.500 3.500-.5 3 4 3.500 5-.2h5c1 3.700 5.500 3.200 5 .2-.2-1.500-1.500-2-2.500-3.500 1-1.500 2.300-2 2.500-3.500.5-3-4-3.500-5 .2z" fill="none" stroke="#fff" strokeWidth="2.700" strokeLinejoin="round" /></svg>
);
const SublimeIcon = () => (
  <svg width="24" height="24" viewBox="0 0 24 24"><rect width="24" height="24" rx="1.500" fill="#4a4a4a" /><path d="M6 8l12-4v4.500l-7 2.300 7 2.200v4L6 20.500V16l7-2.200L6 11.700z" fill="#ff9800" /></svg>
);
const WpsIcon = () => (
  <svg width="24" height="18" viewBox="0 0 24 18"><path d="M0 0h8.500v3H5l3.800 9L13 0h4l-6.500 18H7z" fill="#f23a22" /><path d="M12.500 6.500L15.500 13 20.500 0H24l-7 18h-3l-3.500-7z" fill="#ff3a1e" /></svg>
);
const ChromeIcon = () => (
  <svg width="24" height="24" viewBox="0 0 24 24">
    <path d="M12 12L1.600 6A12 12 0 0 1 22.400 6z" fill="#ea4335" />
    <path d="M12 6h10.400A12 12 0 0 1 12 24l5.200-9z" fill="#fbc116" />
    <path d="M1.600 6L6.800 15l5.200 3 3.400-1L12 24A12 12 0 0 1 1.600 6z" fill="#34a853" />
    <circle cx="12" cy="12" r="6" fill="#fff" /><circle cx="12" cy="12" r="4.700" fill="#2f7df0" />
  </svg>
);

function Bar() {
  return (
    <Taskbar>
      <Cell $w={48}><svg width="16" height="16" fill="#fff"><path d="M0 2.200L6.700 1.200V7.600H0zM7.500 1.100L16 0v7.600H7.500zM0 8.400h6.700v6.400L0 13.800zM7.500 8.400H16V16l-8.500-1.200z" /></svg></Cell>
      <Cell $w={48}>
        <svg width="17" height="16" viewBox="0 0 17 16" fill="none" stroke="#fff" strokeWidth="1.200"><path d="M.6 0v2.500h10.500V0M.6 5h10.500v6H.6zM.6 16v-2.500h10.500V16M14.500 0v3M14.500 8v8" /><path d="M13 4h4v3h-4z" fill="#fff" stroke="none" /></svg>
      </Cell>
      <Spacer $w={657.5} />
      <TaskApp><IconBox><FolderIcon /></IconBox><Running $w={40} /></TaskApp>
      <TaskApp><IconBox><FirefoxIcon /></IconBox><Running $w={40} /></TaskApp>
      <TaskApp><IconBox><LambdaIcon /></IconBox><Running $w={40} /></TaskApp>
      <TaskApp><IconBox><XamppIcon /></IconBox><Running $w={40} /></TaskApp>
      <TaskApp><IconBox><SublimeIcon /></IconBox><Running $w={40} $split /></TaskApp>
      <TaskApp><IconBox><WpsIcon /></IconBox></TaskApp>
      <TaskApp $active><IconBox><ChromeIcon /></IconBox><Running $w={48} /></TaskApp>
      <Spacer />
      <Cell $w={24}><svg width="12" height="7" viewBox="0 0 12 7" fill="none" stroke="#fff" strokeWidth="1.200"><path d="M.6 6.400L6 1l5.400 5.400" /></svg></Cell>
      <Cell $w={25}>
        <svg width="12" height="16" viewBox="0 0 12 16" fill="none" stroke="#fff" strokeWidth="1.100"><rect x="1" y="4.500" width="7" height="7.500" rx="1" /><path d="M8 7.500l3-1.500v5L8 9.500M2.500 2q3-2 6 0M2.500 14.500q3 2 6 0" /></svg>
      </Cell>
      <Cell $w={24}>
        <svg width="13" height="13" viewBox="0 0 13 13" fill="none" stroke="#fff" strokeWidth="1.100"><path d="M.8 12.500A12 12 0 0 1 12.500 1.500M4 12.500a8.500 8.500 0 0 1 8.500-7.500M7 12.500a5.500 5.500 0 0 1 5.500-4.500" /><circle cx="11.300" cy="11.800" r="1" fill="#fff" stroke="none" /></svg>
      </Cell>
      <Cell $w={19}>
        <svg width="16" height="13" viewBox="0 0 16 13" fill="none" stroke="#fff" strokeWidth="1.100"><path d="M.6 4.200h2.300L6 1v11L2.900 8.800H.6zM8 4.500q1.500 2 0 4" /><path d="M10 3q3 3.500 0 7M12.500 1q4.500 5.500 0 11" stroke="#96989c" /></svg>
      </Cell>
      <Clock><Fit w={49} size={11.500}>11:27 AM</Fit><Fit w={58} size={11.500}>10/14/2022</Fit></Clock>
      <Cell $w={46}>
        <svg width="26" height="26" viewBox="0 0 26 26">
          <path d="M1 2h16v12H10l-3 3v-3H1z" fill="#fff" /><path d="M3.500 5h11M3.500 8h11M3.500 11h6" stroke="#1f2126" />
          <circle cx="17" cy="17.500" r="7.700" fill="#34363b" stroke="#8d8f93" />
          <text x="17" y="21.500" textAnchor="middle" fontSize="11" fill="#fff">1</text>
        </svg>
      </Cell>
      <Cell $w={1}><svg width="1" height="40"><rect width="1" height="40" fill="#55575b" /></svg></Cell>
      <Spacer $w={4} />
    </Taskbar>
  );
}

export default function App() {
  return (
    <>
      <Global />
      <Screen>
        <Frame />
        <BackPage />
        <Bar />
        <Dialog>
          <Preview><SheetPreview /></Preview>
          <PrintPanel />
        </Dialog>
      </Screen>
    </>
  );
}
